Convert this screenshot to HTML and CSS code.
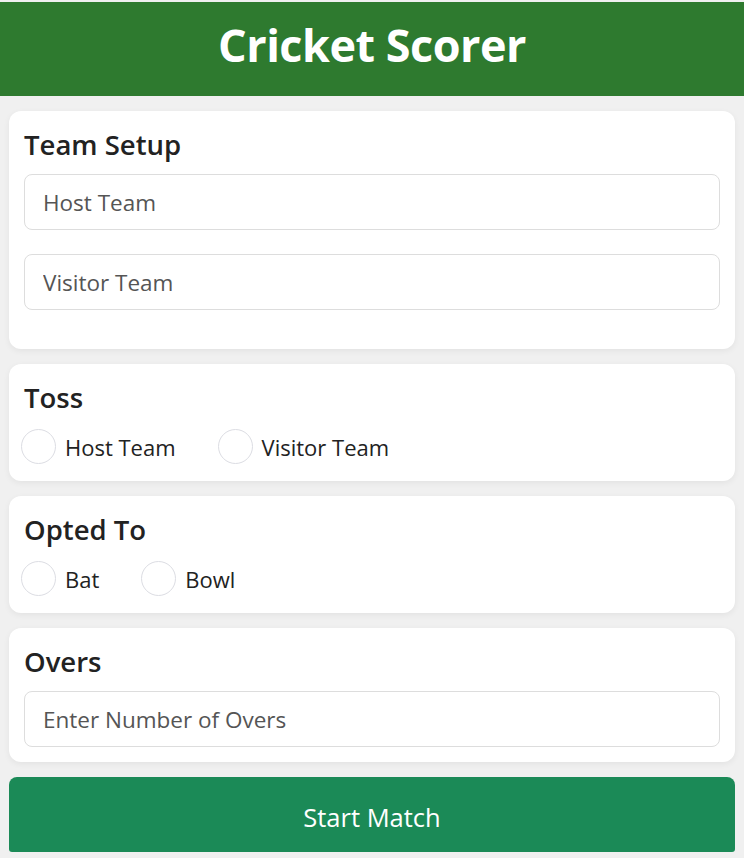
FILE: index.html
```html
<!DOCTYPE html>
<html lang="en">
<head>
<meta charset="utf-8">
<title>Cricket Scorer</title>
<link rel="stylesheet" href="styles.css">
</head>
<body>
<header class="app-header">
  <h1 class="app-title">Cricket Scorer</h1>
</header>
<main class="content">
  <section class="card">
    <h2 class="card-title">Team Setup</h2>
    <input class="text-input spaced" type="text" placeholder="Host Team">
    <input class="text-input spaced" type="text" placeholder="Visitor Team">
  </section>
  <section class="card">
    <h2 class="card-title">Toss</h2>
    <div class="radio-row">
      <label class="radio-option"><input class="radio" type="radio" name="toss"><span>Host Team</span></label>
      <label class="radio-option"><input class="radio" type="radio" name="toss"><span>Visitor Team</span></label>
    </div>
  </section>
  <section class="card">
    <h2 class="card-title">Opted To</h2>
    <div class="radio-row">
      <label class="radio-option"><input class="radio" type="radio" name="opt"><span>Bat</span></label>
      <label class="radio-option"><input class="radio" type="radio" name="opt"><span>Bowl</span></label>
    </div>
  </section>
  <section class="card">
    <h2 class="card-title">Overs</h2>
    <input class="text-input" type="text" placeholder="Enter Number of Overs">
  </section>
  <button class="start-btn" type="button">Start Match</button>
</main>
</body>
</html>
```
FILE: styles.css
```css
* { box-sizing: border-box; }
html { background: #ffffff; }
body {
  margin: 0;
  padding-top: 2px;
  background: #f0f0f0;
  font-family: "Open Sans", "Noto Sans", sans-serif;
  color: #222;
  min-height: 100vh;
}
.app-header {
  background: #2e7a2f;
  height: 94px;
  padding-bottom: 8px;
  display: flex;
  align-items: center;
  justify-content: center;
}
.app-title {
  margin: 0;
  color: #fff;
  font-size: 45px;
  line-height: 1.2;
  font-weight: 700;
  letter-spacing: -0.5px;
}
.content {
  display: flex;
  flex-direction: column;
  gap: 15px;
  padding: 15px 9px 6px;
}
.card {
  background: #fff;
  border-radius: 12px;
  padding: 15px;
  box-shadow: 0 2px 6px rgba(0,0,0,0.06);
  display: flex;
  flex-direction: column;
}
.card-title {
  font-size: 27.5px;
  line-height: 34px;
  padding-top: 2px;
  margin: 0 0 12px;
  font-weight: 600;
  color: #222;
}
.text-input {
  height: 56px;
  width: 100%;
  border: 1px solid #dddddd;
  border-radius: 8px;
  padding: 0 18px;
  font-family: inherit;
  font-size: 22.5px;
  color: #222;
  background: #fff;
  outline: none;
}
.text-input::placeholder { color: #555; }
.spaced { margin-bottom: 24px; }
.radio-row {
  display: flex;
  height: 39px;
  align-items: center;
  margin-left: -3px;
}
.radio-option {
  display: flex;
  align-items: center;
  gap: 9px;
  margin-right: 42px;
  font-size: 22px;
  color: #222;
}
.radio {
  appearance: none;
  -webkit-appearance: none;
  margin: 0;
  width: 35px;
  height: 35px;
  border-radius: 50%;
  border: 1px solid #dcdde3;
  background: #fff;
}
.start-btn {
  height: 75px;
  padding: 5px 0 0;
  border: none;
  border-radius: 8px 8px 3px 3px;
  background: #1b8a57;
  color: #fff;
  font-family: inherit;
  font-size: 25.5px;
  line-height: 1.2;
  cursor: pointer;
}
```
